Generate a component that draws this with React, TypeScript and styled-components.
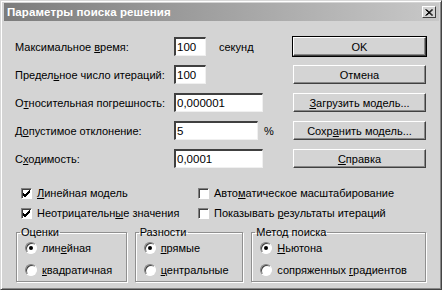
import React from 'react';
import styled, {createGlobalStyle} from 'styled-components';

const GlobalStyle = createGlobalStyle`
	html, body {
		margin: 0;
		padding: 0;
		background: #ffffff;
	}
	body {
		font-family: "Liberation Sans", Arial, sans-serif;
		font-size: 11px;
		color: #000;
	}
`;

const Window = styled.div`
	width: 442px;
	height: 290px;
	box-sizing: border-box;
	background: #d4d4d4;
	border: 1px solid #d8d8d8;
	border-right-color: #444;
	border-bottom-color: #444;
	box-shadow: inset 1px 1px 0 #fff, inset -1px -1px 0 #888;
	padding: 2px 2px 2px 3px;
	display: flex;
	flex-direction: column;
`;

const TitleBar = styled.div`
	height: 18px;
	display: flex;
	align-items: center;
	justify-content: space-between;
	padding: 0 3px 0 3px;
	background: linear-gradient(to right, #7c7c7c, #c8c8c8);
	color: #fff;
	font-weight: bold;
	font-size: 11.5px;
	letter-spacing: 0.1px;
`;

const CloseButton = styled.div`
	width: 14px;
	height: 12px;
	box-sizing: border-box;
	background: #d4d4d4;
	border: 1px solid;
	border-color: #fff #404040 #404040 #fff;
	display: flex;
	align-items: center;
	justify-content: center;
`;

const Body = styled.div`
	flex: 1;
	display: flex;
	flex-direction: column;
	padding: 16px 13px 0 11px;
`;

const Top = styled.div`
	display: flex;
	justify-content: space-between;
`;

const Form = styled.div`
	display: flex;
	flex-direction: column;
	gap: 9px;
`;

const FieldRow = styled.div`
	height: 19px;
	display: flex;
	align-items: center;
`;

const Label = styled.span`
	width: 159px;
	flex: none;
`;

const Input = styled.div<{$w: number}>`
	width: ${p => p.$w}px;
	height: 19px;
	box-sizing: border-box;
	background: #fff;
	border-top: 2px solid #404040;
	border-left: 2px solid #404040;
	border-right: 1px solid #f0f0f0;
	border-bottom: 1px solid #f0f0f0;
	padding: 1px 0 0 1px;
	line-height: 15px;
	font-size: 11.5px;
`;

const Unit = styled.span<{$gap: number}>`
	margin-left: ${p => p.$gap}px;
`;

const Buttons = styled.div`
	width: 133px;
	display: flex;
	flex-direction: column;
	gap: 9px;
`;

const Button = styled.div<{$default?: boolean}>`
	height: 19px;
	box-sizing: border-box;
	display: flex;
	align-items: center;
	justify-content: center;
	background: #d4d4d4;
	border: 1px solid;
	border-color: #fff #404040 #404040 #fff;
	box-shadow: ${p => p.$default
		? '0 0 0 1px #000, inset -1px -1px 0 #888'
		: 'inset -1px -1px 0 #888'};
`;

const Checks = styled.div`
	display: grid;
	grid-template-columns: 177px 1fr;
	row-gap: 8px;
	margin: 19px 0 0 6px;
`;

const Check = styled.div`
	display: flex;
	align-items: center;
	gap: 5px;
	height: 12px;
`;

const Box = styled.div`
	width: 11px;
	height: 11px;
	box-sizing: border-box;
	background: #fff;
	border-top: 1px solid #808080;
	border-left: 1px solid #808080;
	border-right: 1px solid #fff;
	border-bottom: 1px solid #fff;
	box-shadow: inset 1px 1px 0 #404040;
	display: flex;
	align-items: center;
	justify-content: center;
`;

const Groups = styled.div`
	display: flex;
	gap: 7px;
	margin: 8px 0 0 1px;
`;

const Group = styled.fieldset<{$w: number}>`
	width: ${p => p.$w}px;
	height: 55px;
	box-sizing: border-box;
	margin: 0;
	padding: 4px 0 0 8px;
	border: 1px solid #909090;
	box-shadow: 1px 1px 0 #fff, inset 1px 1px 0 #fff;
	display: flex;
	flex-direction: column;
	gap: 10px;

	& + & {
		margin-left: 1px;
	}
`;

const Legend = styled.legend`
	padding: 0 1px;
	margin-left: -5px;
	line-height: 11px;
`;

const Radio = styled.div`
	display: flex;
	align-items: center;
	gap: 5px;
	height: 12px;
`;

const RadioDot = styled.div<{$on?: boolean}>`
	width: 12px;
	height: 12px;
	box-sizing: border-box;
	border-radius: 50%;
	background: #fff;
	border: 1px solid;
	border-color: #808080 #fff #fff #808080;
	box-shadow: inset 1px 1px 0 #404040;
	display: flex;
	align-items: center;
	justify-content: center;

	&::after {
		content: '';
		display: ${p => (p.$on ? 'block' : 'none')};
		width: 4px;
		height: 4px;
		border-radius: 50%;
		background: #000;
	}
`;

const U = styled.span`
	text-decoration: underline;
`;

const Tick = () => (
	<svg width="9" height="9" viewBox="0 0 9 9">
		<path d="M1 4 L3 6 L8 1 M1 5 L3 7 L8 2 M1 6 L3 8 L8 3" stroke="#000" strokeWidth="1" fill="none"/>
	</svg>
);

const CloseX = () => (
	<svg width="8" height="7" viewBox="0 0 8 7">
		<path d="M0.5 0.5 L7 6.5 M1.5 0.5 L8 6.5 M7 0.5 L0.5 6.5 M8 0.5 L1.5 6.5" stroke="#000" strokeWidth="1"/>
	</svg>
);

export default function App() {
	return (
		<>
			<GlobalStyle/>
			<Window>
				<TitleBar>
					<span>Параметры поиска решения</span>
					<CloseButton><CloseX/></CloseButton>
				</TitleBar>
				<Body>
					<Top>
						<Form>
							<FieldRow>
								<Label>Максимальное <U>в</U>ремя:</Label>
								<Input $w={32}>100</Input>
								<Unit $gap={13}>секунд</Unit>
							</FieldRow>
							<FieldRow>
								<Label>Предел<U>ь</U>ное число итераций:</Label>
								<Input $w={32}>100</Input>
							</FieldRow>
							<FieldRow>
								<Label>О<U>т</U>носительная погрешность:</Label>
								<Input $w={89}>0,000001</Input>
							</FieldRow>
							<FieldRow>
								<Label>Д<U>о</U>пустимое отклонение:</Label>
								<Input $w={84}>5</Input>
								<Unit $gap={6}>%</Unit>
							</FieldRow>
							<FieldRow>
								<Label>С<U>х</U>одимость:</Label>
								<Input $w={89}>0,0001</Input>
							</FieldRow>
						</Form>
						<Buttons>
							<Button $default>OK</Button>
							<Button>Отмена</Button>
							<Button><span><U>З</U>агрузить модель...</span></Button>
							<Button><span>Сохр<U>а</U>нить модель...</span></Button>
							<Button><span><U>С</U>правка</span></Button>
						</Buttons>
					</Top>
					<Checks>
						<Check><Box><Tick/></Box><span><U>Л</U>инейная модель</span></Check>
						<Check><Box/><span>Авто<U>м</U>атическое масштабирование</span></Check>
						<Check><Box><Tick/></Box><span>Неотрицательн<U>ы</U>е значения</span></Check>
						<Check><Box/><span>Показывать <U>р</U>езультаты итераций</span></Check>
					</Checks>
					<Groups>
						<Group $w={112}>
							<Legend>Оценки</Legend>
							<Radio><RadioDot $on/><span>лин<U>е</U>йная</span></Radio>
							<Radio><RadioDot/><span><U>к</U>вадратичная</span></Radio>
						</Group>
						<Group $w={110}>
							<Legend>Разности</Legend>
							<Radio><RadioDot $on/><span><U>п</U>рямые</span></Radio>
							<Radio><RadioDot/><span><U>ц</U>ентральные</span></Radio>
						</Group>
						<Group $w={177}>
							<Legend>Метод поиска</Legend>
							<Radio><RadioDot $on/><span><U>Н</U>ьютона</span></Radio>
							<Radio><RadioDot/><span>сопряженных <U>г</U>радиентов</span></Radio>
						</Group>
					</Groups>
				</Body>
			</Window>
		</>
	);
}
